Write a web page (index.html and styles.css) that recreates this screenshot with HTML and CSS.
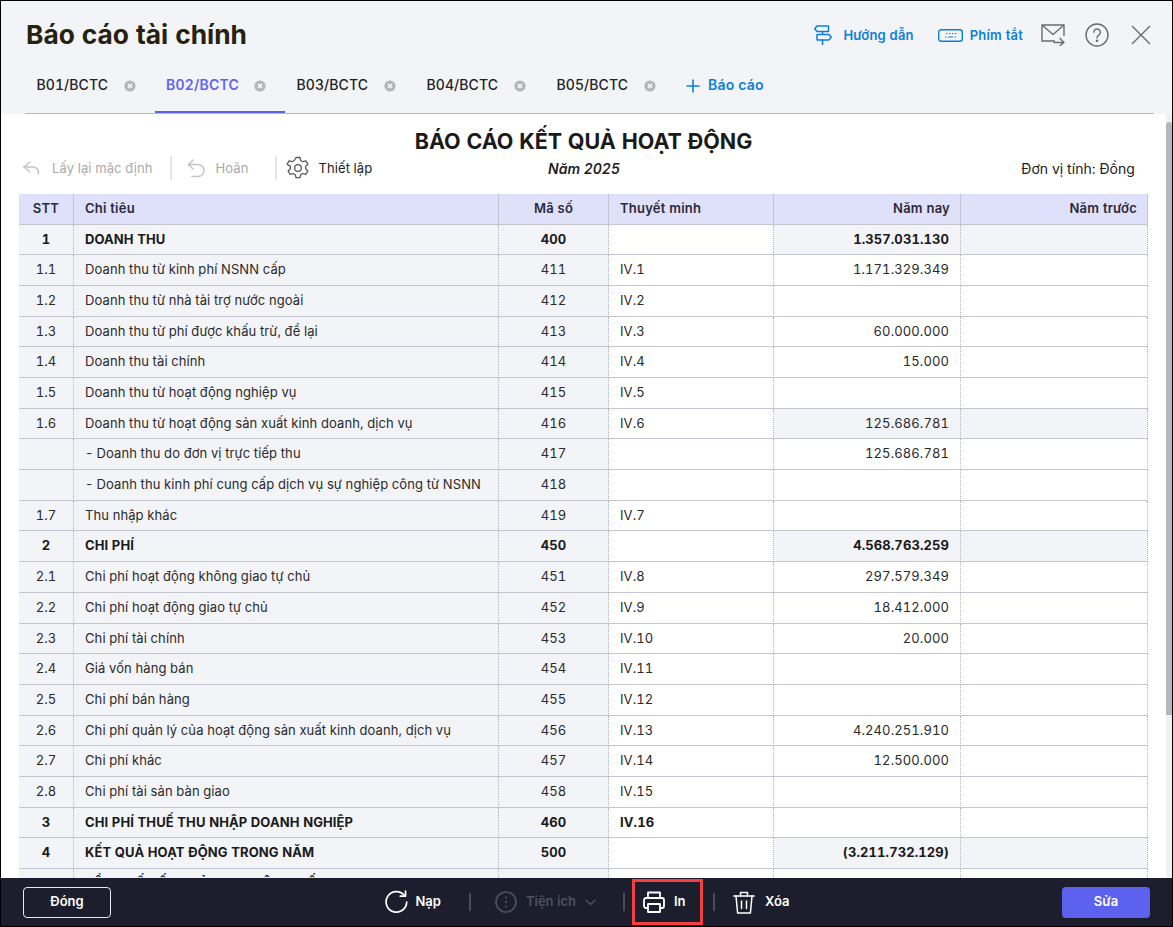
FILE: index.html
```html
<!DOCTYPE html>
<html lang="vi">
<head>
<meta charset="utf-8">
<title>Báo cáo tài chính</title>
<link rel="stylesheet" href="styles.css">
</head>
<body>
<div class="app">
  <header class="head">
    <div class="head-top">
      <h1 class="page-title">Báo cáo tài chính</h1>
      <div class="head-actions">
        <a class="link guide">
          <svg width="18" height="20" viewBox="0 0 18 20" fill="none" stroke="#0d7fd9" stroke-width="1.5" stroke-linejoin="round"><path d="M3 1h11.5v5.500H3L.8 3.800z"/><path d="M3 9.500h12l2.200 2.700-2.200 2.700H3z"/><path d="M8.500 6.500v3M8.500 14.900V19.500" stroke-linecap="round"/></svg>
          <span>Hướng dẫn</span>
        </a>
        <a class="link keys">
          <svg width="25" height="13" viewBox="0 0 25 13" fill="none" stroke="#0d7fd9"><rect x=".7" y=".7" width="23.600" height="11.600" rx="2.500" stroke-width="1.400"/><path d="M8 4.500h1.500M11 4.500h1.500M14 4.500h1.500M17 4.500h1.500M7 8h1.500M10 8h5M16.500 8H18" stroke-width="1.100"/></svg>
          <span>Phím tắt</span>
        </a>
        <svg class="ico-mail" width="24" height="22" viewBox="0 0 24 22" fill="none" stroke="#6b6b6b" stroke-width="1.400" stroke-linejoin="round"><path d="M14 17H1V1h22v11"/><path d="M1 1l11 9.500L23 1"/><path d="M13 18.500h10M19 14.500l4 4-4 3" stroke-linecap="round"/></svg>
        <svg class="ico-help" width="24" height="24" viewBox="0 0 24 24" fill="none" stroke="#6b6b6b" stroke-width="1.400"><circle cx="12" cy="12" r="11"/><path d="M8.800 9.300a3.300 3.300 0 1 1 5 2.800c-1.200.8-1.800 1.400-1.800 2.700" stroke-linecap="round"/><circle cx="12" cy="17.700" r=".6" fill="#6b6b6b"/></svg>
        <svg class="ico-close" width="20" height="20" viewBox="0 0 20 20" fill="none" stroke="#6b6b6b" stroke-width="1.400"><path d="M1 1l18 18M19 1L1 19"/></svg>
      </div>
    </div>
    <nav class="tabs">
      <div class="tab"><span>B01/BCTC</span><svg class="tab-x" viewBox="0 0 12 12"><circle cx="6" cy="6" r="5.600" fill="#b5b5b5"/><path d="M3.900 3.900l4.200 4.200M8.100 3.900l-4.200 4.200" stroke="#fff" stroke-width="1.400"/></svg></div>
      <div class="tab active"><span>B02/BCTC</span><svg class="tab-x" viewBox="0 0 12 12"><circle cx="6" cy="6" r="5.600" fill="#b5b5b5"/><path d="M3.900 3.900l4.200 4.200M8.100 3.900l-4.200 4.200" stroke="#fff" stroke-width="1.400"/></svg></div>
      <div class="tab"><span>B03/BCTC</span><svg class="tab-x" viewBox="0 0 12 12"><circle cx="6" cy="6" r="5.600" fill="#b5b5b5"/><path d="M3.900 3.900l4.200 4.200M8.100 3.900l-4.200 4.200" stroke="#fff" stroke-width="1.400"/></svg></div>
      <div class="tab"><span>B04/BCTC</span><svg class="tab-x" viewBox="0 0 12 12"><circle cx="6" cy="6" r="5.600" fill="#b5b5b5"/><path d="M3.900 3.900l4.200 4.200M8.100 3.900l-4.200 4.200" stroke="#fff" stroke-width="1.400"/></svg></div>
      <div class="tab"><span>B05/BCTC</span><svg class="tab-x" viewBox="0 0 12 12"><circle cx="6" cy="6" r="5.600" fill="#b5b5b5"/><path d="M3.900 3.900l4.200 4.200M8.100 3.900l-4.200 4.200" stroke="#fff" stroke-width="1.400"/></svg></div>
      <a class="add-report"><svg width="14" height="14" viewBox="0 0 14 14" stroke="#0d7fd9" stroke-width="1.600"><path d="M7 .5v13M.5 7h13"/></svg><span>Báo cáo</span></a>
    </nav>
  </header>

  <div class="body">
    <main class="doc">
      <h2 class="doc-title">BÁO CÁO KẾT QUẢ HOẠT ĐỘNG</h2>
      <div class="doc-bar">
        <div class="tools">
          <span class="tool off t-reset">
            <svg width="17" height="14" viewBox="0 0 17 14" fill="none" stroke="#c4c4c4" stroke-width="1.500" stroke-linecap="round" stroke-linejoin="round"><path d="M7 1L1 6l6 5"/><path d="M1 6h9c3.500 0 5.500 2.500 5.500 7"/></svg>
            <span>Lấy lại mặc định</span>
          </span>
          <i class="tool-sep"></i>
          <span class="tool off t-undo">
            <svg width="18" height="19" viewBox="0 0 18 19" fill="none" stroke="#c4c4c4" stroke-width="1.500" stroke-linecap="round" stroke-linejoin="round"><path d="M6 1L1.500 5.500 6 10"/><path d="M1.500 5.500H11a5.800 5.800 0 0 1 0 12H5"/></svg>
            <span>Hoãn</span>
          </span>
          <i class="tool-sep sep-b"></i>
          <span class="tool t-set">
            <svg width="24" height="24" viewBox="0 0 24 24" fill="none" stroke="#5a5a5a" stroke-width="1.300" stroke-linejoin="round"><path d="M10 1.500h4l.7 3 2.200 1.200 3-.9 2 3.400-2.300 2.200v2.400l2.300 2.200-2 3.400-3-.9-2.200 1.200-.7 3h-4l-.7-3-2.200-1.200-3 .9-2-3.400 2.300-2.200v-2.400L1.100 8.200l2-3.400 3 .9 2.200-1.200z"/><circle cx="12" cy="12" r="3.300"/></svg>
            <span>Thiết lập</span>
          </span>
        </div>
        <div class="doc-year">Năm 2025</div>
        <div class="doc-unit">Đơn vị tính: Đồng</div>
      </div>

      <div class="sheet">
        <div class="row row-head"><div class="c mid">STT</div><div class="c">Chỉ tiêu</div><div class="c mid">Mã số</div><div class="c">Thuyết minh</div><div class="c num">Năm nay</div><div class="c num">Năm trước</div></div>
        <div class="row strong mark"><div class="c mid">1</div><div class="c">DOANH THU</div><div class="c mid">400</div><div class="c"></div><div class="c num">1.357.031.130</div><div class="c num"></div></div>
        <div class="row"><div class="c mid">1.1</div><div class="c">Doanh thu từ kinh phí NSNN cấp</div><div class="c mid">411</div><div class="c">IV.1</div><div class="c num">1.171.329.349</div><div class="c num"></div></div>
        <div class="row"><div class="c mid">1.2</div><div class="c">Doanh thu từ nhà tài trợ nước ngoài</div><div class="c mid">412</div><div class="c">IV.2</div><div class="c num"></div><div class="c num"></div></div>
        <div class="row"><div class="c mid">1.3</div><div class="c">Doanh thu từ phí được khấu trừ, để lại</div><div class="c mid">413</div><div class="c">IV.3</div><div class="c num">60.000.000</div><div class="c num"></div></div>
        <div class="row"><div class="c mid">1.4</div><div class="c">Doanh thu tài chính</div><div class="c mid">414</div><div class="c">IV.4</div><div class="c num">15.000</div><div class="c num"></div></div>
        <div class="row"><div class="c mid">1.5</div><div class="c">Doanh thu từ hoạt động nghiệp vụ</div><div class="c mid">415</div><div class="c">IV.5</div><div class="c num"></div><div class="c num"></div></div>
        <div class="row mark"><div class="c mid">1.6</div><div class="c">Doanh thu từ hoạt động sản xuất kinh doanh, dịch vụ</div><div class="c mid">416</div><div class="c">IV.6</div><div class="c num">125.686.781</div><div class="c num"></div></div>
        <div class="row"><div class="c mid"></div><div class="c sub"><b>-</b>Doanh thu do đơn vị trực tiếp thu</div><div class="c mid">417</div><div class="c"></div><div class="c num">125.686.781</div><div class="c num"></div></div>
        <div class="row"><div class="c mid"></div><div class="c sub"><b>-</b>Doanh thu kinh phí cung cấp dịch vụ sự nghiệp công từ NSNN</div><div class="c mid">418</div><div class="c"></div><div class="c num"></div><div class="c num"></div></div>
        <div class="row"><div class="c mid">1.7</div><div class="c">Thu nhập khác</div><div class="c mid">419</div><div class="c">IV.7</div><div class="c num"></div><div class="c num"></div></div>
        <div class="row strong mark"><div class="c mid">2</div><div class="c">CHI PHÍ</div><div class="c mid">450</div><div class="c"></div><div class="c num">4.568.763.259</div><div class="c num"></div></div>
        <div class="row"><div class="c mid">2.1</div><div class="c">Chi phí hoạt động không giao tự chủ</div><div class="c mid">451</div><div class="c">IV.8</div><div class="c num">297.579.349</div><div class="c num"></div></div>
        <div class="row"><div class="c mid">2.2</div><div class="c">Chi phí hoạt động giao tự chủ</div><div class="c mid">452</div><div class="c">IV.9</div><div class="c num">18.412.000</div><div class="c num"></div></div>
        <div class="row"><div class="c mid">2.3</div><div class="c">Chi phí tài chính</div><div class="c mid">453</div><div class="c">IV.10</div><div class="c num">20.000</div><div class="c num"></div></div>
        <div class="row"><div class="c mid">2.4</div><div class="c">Giá vốn hàng bán</div><div class="c mid">454</div><div class="c">IV.11</div><div class="c num"></div><div class="c num"></div></div>
        <div class="row"><div class="c mid">2.5</div><div class="c">Chi phí bán hàng</div><div class="c mid">455</div><div class="c">IV.12</div><div class="c num"></div><div class="c num"></div></div>
        <div class="row"><div class="c mid">2.6</div><div class="c">Chi phí quản lý của hoạt động sản xuất kinh doanh, dịch vụ</div><div class="c mid">456</div><div class="c">IV.13</div><div class="c num">4.240.251.910</div><div class="c num"></div></div>
        <div class="row"><div class="c mid">2.7</div><div class="c">Chi phí khác</div><div class="c mid">457</div><div class="c">IV.14</div><div class="c num">12.500.000</div><div class="c num"></div></div>
        <div class="row"><div class="c mid">2.8</div><div class="c">Chi phí tài sản bàn giao</div><div class="c mid">458</div><div class="c">IV.15</div><div class="c num"></div><div class="c num"></div></div>
        <div class="row strong"><div class="c mid">3</div><div class="c">CHI PHÍ THUẾ THU NHẬP DOANH NGHIỆP</div><div class="c mid">460</div><div class="c">IV.16</div><div class="c num"></div><div class="c num"></div></div>
        <div class="row strong mark"><div class="c mid">4</div><div class="c">KẾT QUẢ HOẠT ĐỘNG TRONG NĂM</div><div class="c mid">500</div><div class="c"></div><div class="c num">(3.211.732.129)</div><div class="c num"></div></div>
        <div class="row strong"><div class="c mid"></div><div class="c">TỔNG SỐ KẾT QUẢ HOẠT ĐỘNG TIẾP THEO</div><div class="c mid"></div><div class="c"></div><div class="c num"></div><div class="c num"></div></div>
      </div>
    </main>
    <div class="scroll-track"><div class="scroll-thumb"></div></div>
  </div>

  <footer class="foot">
    <button class="btn-close">Đóng</button>
    <div class="foot-mid">
      <span class="act a-load">
        <svg width="23" height="24" viewBox="0 0 23 24" fill="none" stroke="#fff" stroke-width="1.700" stroke-linecap="round" stroke-linejoin="round"><path d="M19.500 5.500A10.300 10.300 0 1 0 21.700 12"/><path d="M20.500 1v5.200h-5.200"/></svg>
        <span>Nạp</span>
      </span>
      <i class="foot-sep"></i>
      <span class="act dim a-util">
        <svg width="22" height="22" viewBox="0 0 22 22" fill="none" stroke="#4e505e" stroke-width="1.700"><circle cx="11" cy="11" r="10"/><path d="M11 6.200v.4M11 10.800v.4M11 15.400v.4" stroke-linecap="round" stroke-width="2"/></svg>
        <span>Tiện ích</span>
        <svg class="chev" width="11" height="7" viewBox="0 0 11 7" fill="none" stroke="#4e505e" stroke-width="1.500"><path d="M.8 1l4.700 4.500L10.200 1"/></svg>
      </span>
      <i class="foot-sep"></i>
      <span class="act print">
        <svg width="22" height="22" viewBox="0 0 22 22" fill="none" stroke="#fff" stroke-width="1.800" stroke-linejoin="round"><path d="M5 7V1.500h12V7"/><path d="M5 17H3a2 2 0 0 1-2-2V9a2 2 0 0 1 2-2h16a2 2 0 0 1 2 2v6a2 2 0 0 1-2 2h-2"/><path d="M5 13h12v8H5z"/></svg>
        <span>In</span>
      </span>
      <i class="foot-sep"></i>
      <span class="act a-del">
        <svg width="22" height="23" viewBox="0 0 22 23" fill="none" stroke="#fff" stroke-width="1.500" stroke-linecap="round" stroke-linejoin="round"><path d="M.8 5h20.400"/><path d="M7.500 5V1.500h7V5"/><path d="M3 5l1.600 17h12.800L19 5"/><path d="M8.500 10v7.500M13.500 10v7.500"/></svg>
        <span>Xóa</span>
      </span>
    </div>
    <button class="btn-edit">Sửa</button>
  </footer>
</div>
</body>
</html>
```
FILE: styles.css
```css
* { box-sizing: border-box; }
html, body { margin: 0; padding: 0; height: 100%; }
body { font-family: Inter, "Noto Sans", sans-serif; font-size: 13px; color: #222; overflow: hidden; font-variant-numeric: tabular-nums; }
.app { width: 1173px; height: 927px; border: 1px solid #000; display: flex; flex-direction: column; background: #fff; }

.head { background: #f3f4f8; flex: none; }
.head-top { height: 68px; padding: 0 21px 0 25px; display: flex; align-items: center; justify-content: space-between; }
.page-title { margin: 0; font-size: 26.3px; font-weight: 700; color: #26220f; line-height: 32px; }
.head-actions { display: flex; align-items: center; }
.link { display: flex; align-items: center; color: #0d7fd9; font-weight: 600; font-size: 13px; letter-spacing: .2px; }
.guide svg { margin-right: 11px; }
.keys { margin-left: 24px; }
.keys svg { margin-right: 7px; }
.ico-mail { margin-left: 18px; }
.ico-help { margin-left: 20px; }
.ico-close { margin-left: 22px; }

.tabs { height: 45px; margin: 0 18px 0 24px; border-bottom: 1px solid #b9b9bd; display: flex; align-items: flex-start; }
.tab { width: 130px; height: 44px; padding: 0 0 0 11.5px; display: flex; align-items: flex-start; line-height: 31px; font-size: 14px; font-weight: 500; color: #222; letter-spacing: .08px; }
.tab span { width: 88px; }
.tab-x { width: 12px; height: 12px; margin: 11px 0 0 -.5px; }
.tab.active { border-bottom: 2px solid #5b60ee; color: #5f64ee; font-weight: 600; padding-left: 11px; letter-spacing: .2px; }
.tab.active .tab-x { margin-left: 0; }
.add-report { display: flex; align-items: center; height: 31px; margin-left: 11px; color: #0d7fd9; font-size: 14px; font-weight: 600; letter-spacing: .2px; }
.add-report svg { margin-right: 8px; margin-top: 2px; }

.body { flex: 1; display: flex; min-height: 0; overflow: hidden; }
.doc { width: 1165px; flex: none; padding: 0 0 0 18px; overflow: hidden; }
.doc-title { margin: 14px 0 0; width: 1129px; text-align: center; font-size: 21.5px; font-weight: 700; line-height: 26px; color: #1a1a1a; }
.doc-bar { width: 1130px; display: grid; grid-template-columns: 1fr auto 1fr; align-items: center; height: 26px; margin-top: 1px; }
.tools { display: flex; align-items: center; color: #aaa; padding-left: 4px; letter-spacing: .1px; }
.tool { display: flex; align-items: center; }
.t-reset svg { margin-right: 12px; }
.t-undo svg { margin-right: 10px; }
.t-set { color: #222; }
.t-set svg { margin-right: 8px; }
.tool-sep { width: 2px; height: 24px; background: #e6e6e8; margin: 0 15px 0 18px; }
.sep-b { margin: 0 9px 0 27px; }
.doc-year { font-size: 14px; font-style: italic; font-weight: 600; color: #1f1f1f; }
.doc-unit { text-align: right; font-size: 14px; color: #222; padding-right: 14px; letter-spacing: .05px; }

.sheet { margin-top: 13px; width: 1129px; }
.row { display: grid; grid-template-columns: 55px 425px 110px 165px 187px 187px; height: 30.69px; }
.c { display: flex; align-items: center; padding: 0 10px 1.7px 11px; border-bottom: 1px solid #c4c5cf; border-right: 1px dotted #b4b4bc; color: #2a2a2a; white-space: nowrap; overflow: hidden; letter-spacing: .1px; }
.row .c:nth-child(1), .row .c:nth-child(2), .row .c:nth-child(3) { background: #f3f4f8; }
.mark .c { background: #f3f4f8; }
.mark .c:nth-child(4) { background: #fff; }
.mid { justify-content: center; padding: 0 0 1.7px; }
.num { justify-content: flex-end; padding-right: 11px; }
.strong .c { font-weight: 700; color: #1a1a1a; }
.sub b { font-weight: 400; margin: 0 3px 0 0; }
.row-head { height: 30.6px; }
.row-head .c, .row-head .c:nth-child(1), .row-head .c:nth-child(2), .row-head .c:nth-child(3) { background: #dfe0fa; font-weight: 600; border-right: 1px solid #c4c5cf; color: #2a2a3a; letter-spacing: .22px; }
.row-head .num { padding-right: 10px; }

.scroll-track { width: 6px; flex: none; background: #f1f1f3; padding-top: 8px; }
.scroll-thumb { height: 593px; background: #b4b7bf; border-radius: 3px 3px 0 0; }

.foot { height: 48px; flex: none; background: #1c1e2d; display: flex; align-items: center; justify-content: space-between; padding: 0 22px 0 22px; }
.btn-close, .btn-edit { width: 88px; height: 31px; border-radius: 4px; font: 600 13px Inter, sans-serif; color: #fff; padding: 0 0 2px; }
.btn-close { background: transparent; border: 1px solid #e8e8ee; }
.btn-edit { background: #5d62ee; border: 0; }
.foot-mid { display: flex; align-items: center; height: 48px; margin-left: 1px; }
.act { display: flex; align-items: center; font-weight: 600; font-size: 13px; color: #fff; }
.act span { padding-bottom: 2px; }
.a-load svg { margin: 0 7px 0 1px; }
.foot-sep { width: 2px; height: 18px; background: #4a4c5a; }
.a-load { margin-right: 28px; }
.a-util { margin-left: 24px; margin-right: 27px; }
.dim { color: #4e505e; }
.a-util svg:first-child { margin-right: 9px; }
.chev { margin-left: 9px; }
.print { margin-left: 7px; margin-right: 10px; width: 71px; height: 46px; border: 3px solid #f44040; padding-left: 8px; }
.print svg { margin-right: 9px; }
.a-del { margin-left: 18px; }
.a-del svg { margin-right: 10px; }
```
